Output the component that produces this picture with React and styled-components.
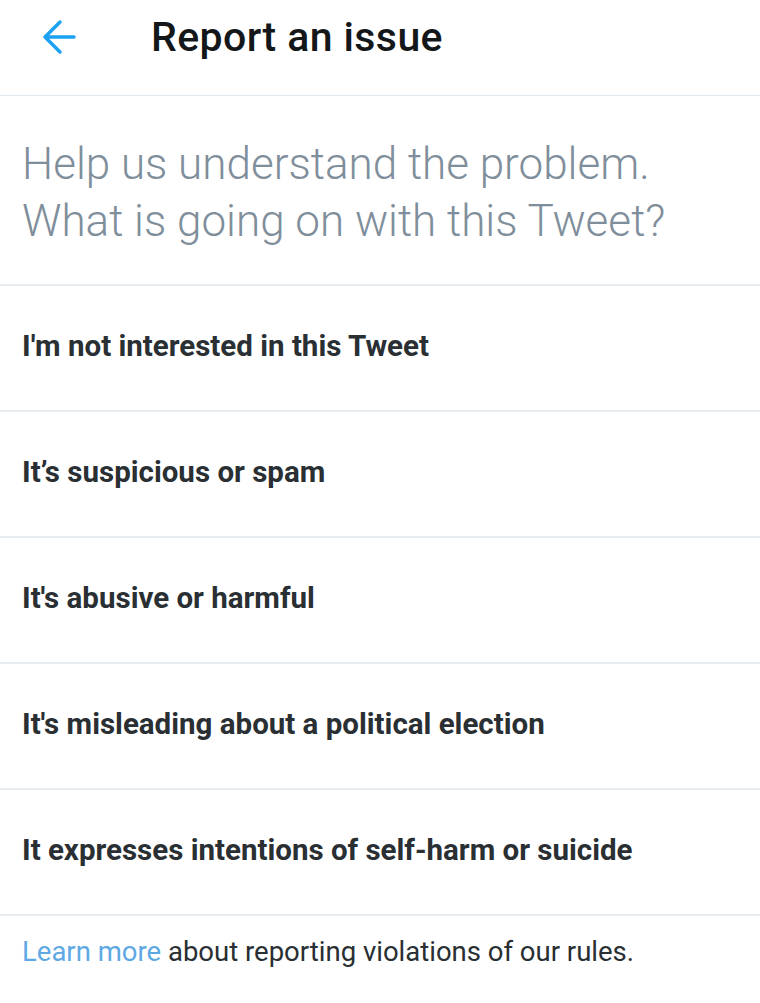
import React from 'react'
import styled, { createGlobalStyle } from 'styled-components'

const GlobalStyle = createGlobalStyle`
    body {
        margin: 0;
        background: #fff;
        font-family: Roboto, "Liberation Sans", sans-serif;
    }
`

const Page = styled.div`
    width: 760px;
    height: 1003px;
    overflow: hidden;
    background: #fff;
`

const Header = styled.div`
    height: 96px;
    display: flex;
    align-items: center;
    padding: 0 0 21px 42px;
    border-bottom: 1px solid #e1e8ed;
    box-sizing: border-box;
`

const BackBtn = styled.button`
    width: 34px;
    height: 34px;
    padding: 0;
    border: none;
    background: none;
    display: flex;
    cursor: pointer;
`

const Title = styled.h1`
    margin: 0 0 0 75px;
    font-size: 41px;
    letter-spacing: 0.4px;
    font-weight: 500;
    line-height: 1;
    color: #14171a;
`

const Intro = styled.div`
    padding: 40px 22px 34px;
    font-size: 44px;
    font-weight: 300;
    line-height: 57px;
    color: #7f8e9b;
    border-bottom: 2px solid #e6ecf0;
`

const Option = styled.div`
    height: 126px;
    display: flex;
    align-items: center;
    padding: 0 22px 4px;
    font-size: 29.5px;
    font-weight: 700;
    color: #292f33;
    border-bottom: 2px solid #e6ecf0;
    box-sizing: border-box;
    cursor: pointer;
`

const Footer = styled.div`
    padding: 19px 22px;
    font-size: 27.5px;
    line-height: 1.2;
    color: #292f33;
`

const Link = styled.a`
    color: #5ea9e4;
    text-decoration: none;
`

const options = [
    "I'm not interested in this Tweet",
    "It’s suspicious or spam",
    "It's abusive or harmful",
    "It's misleading about a political election",
    "It expresses intentions of self-harm or suicide",
]

export default function App() {
    return (
        <Page>
            <GlobalStyle />
            <Header>
                <BackBtn>
                    <svg width="34" height="34" viewBox="0 0 34 34" fill="none" stroke="#1da1f2" strokeWidth="3.4" strokeLinecap="round" strokeLinejoin="round">
                        <path d="M32 17H3M18 2L3 17l15 15" />
                    </svg>
                </BackBtn>
                <Title>Report an issue</Title>
            </Header>
            <Intro>Help us understand the problem.<br />What is going on with this Tweet?</Intro>
            {options.map((o) => (
                <Option key={o}>{o}</Option>
            ))}
            <Footer>
                <Link href="#">Learn more</Link> about reporting violations of our rules.
            </Footer>
        </Page>
    )
}
